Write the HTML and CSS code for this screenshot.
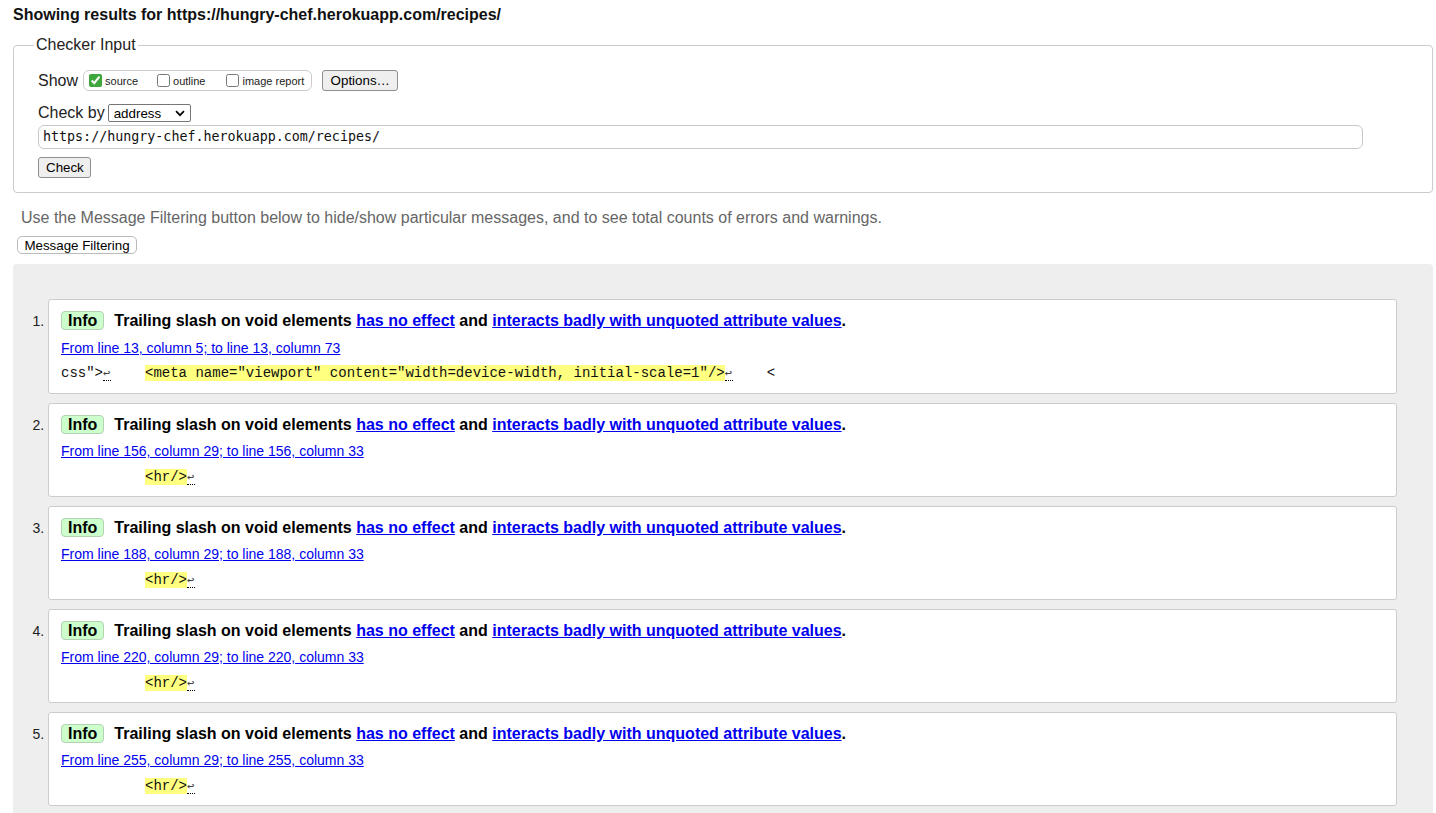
FILE: index.html
```html
<!DOCTYPE html>
<html lang="en">
<head>
<meta charset="utf-8">
<title>Showing results for https://hungry-chef.herokuapp.com/recipes/ - Nu Html Checker</title>
<link rel="stylesheet" href="styles.css">
</head>
<body>
<div class="page">
  <h2 class="title">Showing results for https://hungry-chef.herokuapp.com/recipes/</h2>
  <form class="form">
    <fieldset class="checker">
      <legend>Checker Input</legend>
      <div class="row row-show">
        <span class="lbl">Show</span>
        <span class="opts">
          <label class="opt"><input type="checkbox" checked>source</label>
          <label class="opt opt-outline"><input type="checkbox">outline</label>
          <label class="opt opt-image"><input type="checkbox">image report</label>
        </span>
        <button type="button" class="btn options">Options…</button>
      </div>
      <div class="row row-by">
        <span class="lbl">Check by</span>
        <span class="select">address<svg class="chev" width="10" height="7" viewBox="0 0 10 7"><path d="M1 1.2l4 4 4-4" fill="none" stroke="#000" stroke-width="1.7"/></svg></span>
      </div>
      <div class="url">https://hungry-chef.herokuapp.com/recipes/</div>
      <button type="button" class="btn check">Check</button>
    </fieldset>
  </form>
  <p class="hint">Use the Message Filtering button below to hide/show particular messages, and to see total counts of errors and warnings.</p>
  <button type="button" class="filter">Message Filtering</button>
  <div class="results">
    <ol class="messages">
      <li class="msg">
        <p class="msg-title"><span class="badge">Info</span>Trailing slash on void elements <a href="#">has no effect</a> and <a href="#">interacts badly with unquoted attribute values</a>.</p>
        <p class="loc"><a href="#">From line 13, column 5; to line 13, column 73</a></p>
        <p class="extract">css"&gt;<span class="lf">↩</span>    <mark>&lt;meta name="viewport" content="width=device-width, initial-scale=1"/&gt;</mark><span class="lf">↩</span>    &lt;</p>
      </li>
      <li class="msg">
        <p class="msg-title"><span class="badge">Info</span>Trailing slash on void elements <a href="#">has no effect</a> and <a href="#">interacts badly with unquoted attribute values</a>.</p>
        <p class="loc"><a href="#">From line 156, column 29; to line 156, column 33</a></p>
        <p class="extract">          <mark>&lt;hr/&gt;</mark><span class="lf">↩</span></p>
      </li>
      <li class="msg">
        <p class="msg-title"><span class="badge">Info</span>Trailing slash on void elements <a href="#">has no effect</a> and <a href="#">interacts badly with unquoted attribute values</a>.</p>
        <p class="loc"><a href="#">From line 188, column 29; to line 188, column 33</a></p>
        <p class="extract">          <mark>&lt;hr/&gt;</mark><span class="lf">↩</span></p>
      </li>
      <li class="msg">
        <p class="msg-title"><span class="badge">Info</span>Trailing slash on void elements <a href="#">has no effect</a> and <a href="#">interacts badly with unquoted attribute values</a>.</p>
        <p class="loc"><a href="#">From line 220, column 29; to line 220, column 33</a></p>
        <p class="extract">          <mark>&lt;hr/&gt;</mark><span class="lf">↩</span></p>
      </li>
      <li class="msg">
        <p class="msg-title"><span class="badge">Info</span>Trailing slash on void elements <a href="#">has no effect</a> and <a href="#">interacts badly with unquoted attribute values</a>.</p>
        <p class="loc"><a href="#">From line 255, column 29; to line 255, column 33</a></p>
        <p class="extract">          <mark>&lt;hr/&gt;</mark><span class="lf">↩</span></p>
      </li>
    </ol>
  </div>
</div>
</body>
</html>
```

FILE: styles.css
```css
* { box-sizing: border-box; }
html, body { margin: 0; background: #fff; }
body {
  font-family: "Liberation Sans", Arial, sans-serif;
  color: #000;
}
.page { padding: 5px 3px 0 13px; }

.title {
  margin: 0 0 11px;
  font-size: 16px;
  line-height: 20px;
  font-weight: bold;
  color: #111;
}

.form { margin: 0; }
.checker {
  margin: 0;
  min-width: 0;
  border: 1px solid #ccc;
  border-radius: 4px;
  padding: 16px 24px 14px;
}
.checker legend {
  font-size: 16px;
  line-height: 18px;
  padding: 0 2px;
  margin-left: -4px;
  color: #222;
}

.row { display: flex; align-items: center; }
.row-show { height: 21px; }
.lbl { font-size: 16px; color: #222; }

.opts {
  display: flex;
  align-items: center;
  height: 21px;
  margin-left: 5px;
  padding: 0 7px 0 5px;
  border: 1px solid #ccc;
  border-radius: 6px;
  font-size: 11px;
  color: #222;
}
.opt { display: flex; align-items: center; }
.opt input {
  margin: 0 3px 0 0;
  width: 13px;
  height: 13px;
  accent-color: #3da63d;
}
.opt-outline { margin-left: 19px; }
.opt-image { margin-left: 21px; }

.btn {
  font-family: "Liberation Sans", Arial, sans-serif;
  font-size: 13.333px;
  height: 21px;
  padding: 0 7px;
  background: #efefef;
  border: 1px solid #8f8f8f;
  border-radius: 3px;
  color: #000;
}
.options { margin-left: 10px; width: 76px; }

.row-by { margin-top: 13px; height: 18px; }
.select {
  margin-left: 3px;
  width: 83px;
  height: 18px;
  border: 1px solid #767676;
  border-radius: 2px;
  background: #fff;
  display: flex;
  align-items: center;
  justify-content: space-between;
  padding: 0 5px 0 5px;
  font-size: 13.333px;
}
.chev { display: block; }

.url {
  margin-top: 3px;
  width: 1325px;
  height: 24px;
  border: 1px solid #c8c8c8;
  border-radius: 6px;
  padding: 0 4px;
  font-family: "DejaVu Sans Mono", monospace;
  font-size: 13.333px;
  line-height: 22px;
  color: #111;
}
.check { display: block; margin-top: 8px; width: 53px; }

.hint {
  margin: 16px 0 0 8px;
  font-size: 16px;
  line-height: 18px;
  color: #666;
}
.filter {
  display: block;
  margin: 9px 0 0 4px;
  width: 120px;
  height: 18px;
  padding: 0;
  background: #fff;
  border: 1px solid #bbb;
  border-radius: 5px;
  font-family: "Liberation Sans", Arial, sans-serif;
  font-size: 13.333px;
  color: #000;
}

.results {
  margin-top: 10px;
  background: #eee;
  border-radius: 4px;
  padding: 35px 36px 20px 35px;
}
.messages {
  margin: 0;
  padding: 0;
  list-style: decimal outside;
}
.msg {
  background: #fff;
  border: 1px solid #ccc;
  border-radius: 3px;
  padding: 11px 12px 10px;
  margin-bottom: 9px;
  font-size: 16px;
}
.msg:first-child { padding-bottom: 11px; }
.msg:first-child .loc { margin-top: 8px; }
.msg:first-child .extract { margin-top: 7px; }
.msg::marker { font-size: 14px; color: #222; }

.msg-title {
  margin: 0;
  line-height: 20px;
  font-weight: bold;
}
.badge {
  display: inline-block;
  line-height: 17px;
  padding: 0 6px;
  margin-right: 10px;
  border: 1px solid #b2d2b2;
  border-radius: 4px;
  background: #ccffcc;
}
a { color: #0000ee; text-decoration: underline; }

.loc {
  margin: 7px 0 0;
  font-size: 14px;
  line-height: 18px;
}
.extract {
  margin: 8px 0 0;
  font-family: "Liberation Mono", "Courier New", monospace;
  font-size: 14px;
  line-height: 18px;
  white-space: pre;
  color: #111;
}
.extract mark { background: #ffff80; color: inherit; }
.lf {
  display: inline-block;
  width: 8.4px;
  line-height: 14px;
  font-family: "DejaVu Sans Mono", monospace;
  font-size: 12px;
  color: #444;
  border-bottom: 1px dotted #000;
}
```
